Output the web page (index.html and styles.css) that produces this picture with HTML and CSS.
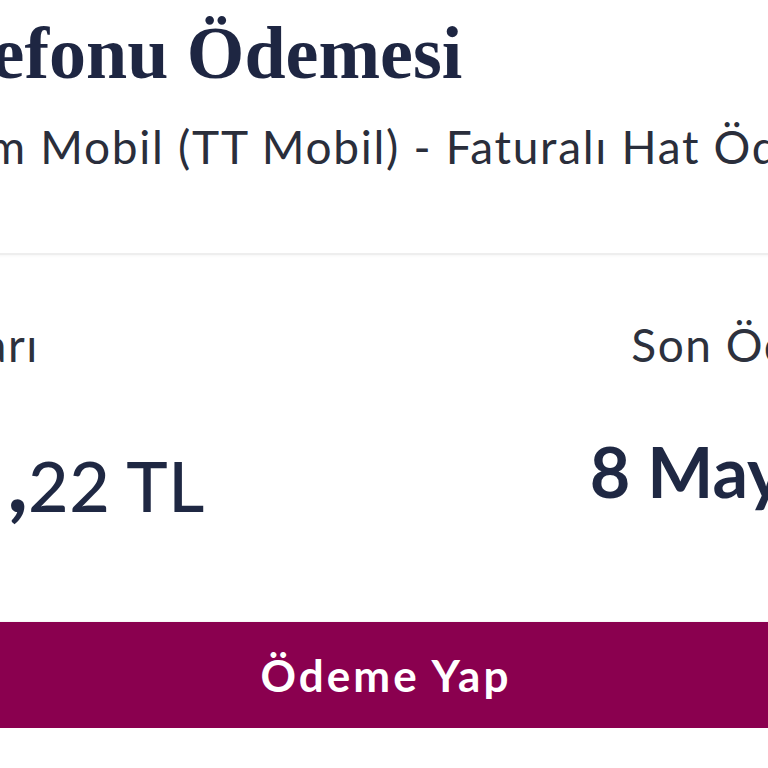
FILE: index.html
```html
<!DOCTYPE html>
<html lang="tr">
<head>
<meta charset="utf-8">
<title>Cep Telefonu Ödemesi</title>
<link rel="stylesheet" href="styles.css">
</head>
<body>
<div class="page">
  <header class="header">
    <h1 class="title">Cep Telefonu Ödemesi</h1>
    <p class="subtitle">Türk Telekom Mobil (TT Mobil) - Faturalı Hat Ödemesi</p>
  </header>
  <section class="summary">
    <div class="col col-left">
      <div class="label">Fatura Tutarı</div>
      <div class="amount"><b class="amount-int">12.245<span class="comma">,</span></b>22 TL</div>
    </div>
    <div class="col col-right">
      <div class="label">Son Ödeme Tarihi</div>
      <div class="date">8 Mayıs 2024</div>
    </div>
  </section>
  <button class="pay">Ödeme Yap</button>
</div>
</body>
</html>
```
FILE: styles.css
```css
html, body {
  margin: 0;
  padding: 0;
  background: #ffffff;
  overflow: hidden;
}
.page {
  width: 1258px;
  margin-left: -243px;
  font-family: Lato, "Noto Sans", sans-serif;
}
.header {
  padding: 13px 0 78px 0;
  border-bottom: 2px solid #eeeeee;
  box-shadow: 0 1px 3px rgba(0, 0, 0, 0.04);
}
.title {
  margin: 0 0 0 -6px;
  font-family: "Liberation Serif", "DejaVu Serif", serif;
  font-weight: 700;
  font-size: 74px;
  line-height: 80px;
  color: #1e2642;
  white-space: nowrap;
}
.subtitle {
  margin: 26px 0 0 -16px;
  font-size: 46px;
  line-height: 56px;
  letter-spacing: 1.7px;
  color: #2a2e3b;
  white-space: nowrap;
}
.summary {
  display: flex;
  justify-content: space-between;
  padding: 62px 3px 0 10px;
}
.col-right {
  text-align: right;
}
.label {
  font-size: 46px;
  line-height: 56px;
  letter-spacing: 1.5px;
  color: #2d313d;
  white-space: nowrap;
}
.amount {
  margin-top: 72px;
  padding-left: 6px;
  font-size: 70px;
  line-height: 80px;
  font-weight: 500;
  letter-spacing: 0.5px;
  color: #1f2843;
  white-space: nowrap;
}
.amount-int {
  font-weight: 900;
}
.comma {
  padding-left: 12px;
  font-size: 84px;
  line-height: 0;
}
.date {
  margin-top: 58px;
  font-size: 70px;
  line-height: 80px;
  font-weight: 700;
  color: #1f2843;
  white-space: nowrap;
}
.pay {
  display: block;
  width: 100%;
  height: 106px;
  margin-top: 97px;
  border: 0;
  padding: 0;
  background: #8a004f;
  color: #ffffff;
  font-family: Lato, "Noto Sans", sans-serif;
  font-size: 44px;
  font-weight: 700;
  letter-spacing: 3px;
  line-height: 106px;
  box-shadow: 0 1px 2px rgba(60, 30, 50, 0.5);
}
```
